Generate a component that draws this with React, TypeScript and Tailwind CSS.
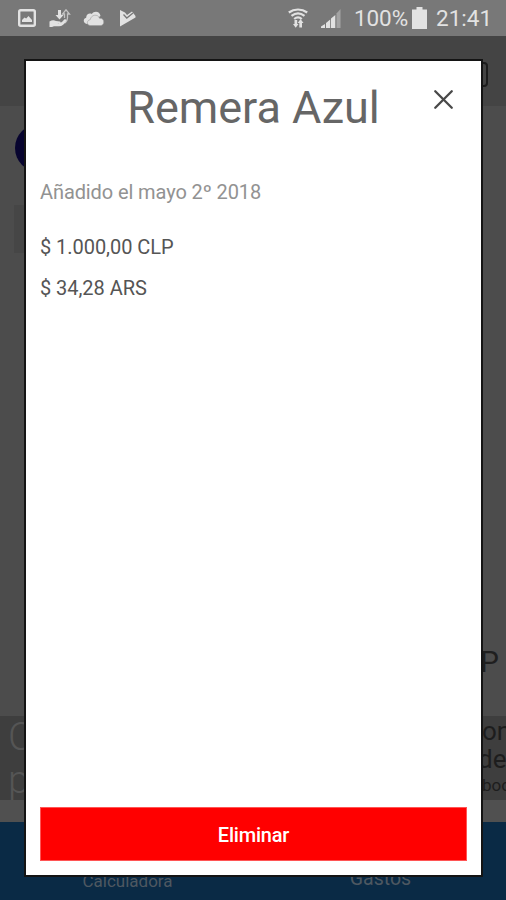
import { X } from "lucide-react";

const StatusBar = () => {
  return (
    <div className="flex h-9 items-center bg-[#787878] text-[#e2e2e2]">
      {/* Notifications */}
      <svg className="ml-[18px] h-[18px] w-[18px]" viewBox="0 0 18 18">
        <rect x="1.200" y="1.200" width="15.600" height="15.600" rx="1.500" fill="none" stroke="currentColor" strokeWidth="2.400" />
        <path d="M4 13v-2l2.500-2.500L8.200 9.500 10.500 7l3.500 4v2z" fill="currentColor" />
      </svg>
      <svg className="ml-[13px] h-[19px] w-[22px]" viewBox="0 0 22 19">
        <path d="M9 1h3v5h2.500l-4 4.500-4-4.500H9z" fill="currentColor" />
        <path d="M15.500 9V5h-2L17 .8 20.500 5h-2v4c0 2-1 3.500-2.500 5" fill="none" stroke="#c4c4c4" strokeWidth="1.300" />
        <path d="M.5 12.500C3 11 5 11 7 12l4 .5c1 .3.8 1.800-.3 1.800H8c3.500.5 5-1 7-3.500 1.500-1.200 3 0 2 1.500-2 3.500-4 5-7 5H5l-2 .8H.5z" fill="currentColor" />
      </svg>
      <svg className="ml-3 h-[17px] w-[22px]" viewBox="0 0 22 17">
        <path d="M4 14C0 13.500-.3 8.600 3.200 7.800 3 4.200 6.500 2.600 8.800 4 11 .5 17 1 17.500 6L8 12z" fill="currentColor" />
        <path d="M7.500 15.500c-4.200 0-4-5.500-.3-5.800C8 4.500 15 3.500 16.500 8.300c3-.2 4.500 2 4.200 4-.1 1.800-1.200 3.200-3.200 3.200z" fill="currentColor" stroke="#9a9a9a" strokeWidth=".6" />
      </svg>
      <svg className="ml-[14px] h-[18px] w-[17px]" viewBox="0 0 17 18">
        <path d="M1 1l5 2.500 2 2.500 5-3.500 3.500 4.500v1.500L1 17.500z" fill="currentColor" />
        <path d="M4.500 5.500L7.800 9l6.200-5" fill="none" stroke="#777777" strokeWidth="1.300" />
      </svg>

      {/* Connection, battery and clock */}
      <svg className="ml-auto h-5 w-5" viewBox="0 0 20 20">
        <g fill="none" stroke="currentColor" strokeWidth="2.200">
          <path d="M.8 4.500c5.500-4 12.900-4 18.400 0" />
          <path d="M3.500 7.900c4-3.200 9-3.200 13 0" />
          <path d="M6.200 11c2.400-2 5.200-2 7.600 0" />
        </g>
        <path d="M6.500 12h2.700v4h1.300L7.700 19.800 5 16h1.500zM12.500 11l3 4h-1.500v4.500h-2.700V15H9.700z" fill="currentColor" />
      </svg>
      <svg className="ml-[13px] h-[19px] w-5" viewBox="0 0 20 19">
        <path d="M0 19v-1.500L4 15v4z" fill="currentColor" />
        <path d="M5 19v-5L9.200 10.500V19zM10 19V9.500L14.300 6v13z" fill="currentColor" />
        <path d="M15.500 19V4.500L19.500 0v19z" fill="#a3a3a3" />
      </svg>
      <span className="ml-[13px] w-[54px] whitespace-nowrap text-[22.500px] leading-9 tracking-[-0.1px]">100%</span>
      <svg className="ml-1 h-[22px] w-[15px]" viewBox="0 0 15 22">
        <path d="M4.500 0h6v2.500H15V22H0V2.500h4.500z" fill="currentColor" />
      </svg>
      <span className="ml-[9px] w-[70px] whitespace-nowrap text-[22.500px] leading-9">21:41</span>
    </div>
  );
};

const Screen = () => {
  return (
    <div className="flex h-[864px] flex-col overflow-hidden">
      <div className="flex h-[70px] items-start justify-end bg-[#444444] pt-[26px] pr-[18px]">
        <div className="h-[25px] w-5 rounded-sm border-2 border-[#1c1c1c]"></div>
      </div>

      <div className="flex h-[610px] flex-col bg-[#4c4c4c]">
        <div className="h-[99px] pt-[18px] pl-[15px]">
          <div className="h-12 w-12 rounded-full bg-[#07042f]"></div>
        </div>
        <div className="ml-[14px] h-[48px] w-10 bg-[#464646]"></div>
        <span className="mt-auto mb-[36px] ml-[480px] text-[30px] leading-9 text-[#1f1f1f]">P</span>
      </div>

      {/* Ad banner */}
      <div className="flex h-[84px] justify-between overflow-hidden bg-[#3e3e3e]">
        <div className="flex flex-col pl-2 text-[39px] leading-[43px] font-light text-[#555555]">
          <span>C</span>
          <span>p</span>
        </div>
        <div className="flex w-[24px] flex-col whitespace-nowrap text-[26px] leading-7 text-[#1d1d1d]">
          <span className="mt-px">on</span>
          <span className="-ml-1">de</span>
          <span className="text-[17px] leading-6">boo</span>
        </div>
      </div>
      <div className="h-[22px] bg-[#505050]"></div>

      {/* Bottom tabs */}
      <div className="flex h-[78px] items-end bg-[#0a2a45] pb-[9px] text-[#4e5861]">
        <span className="w-[255px] text-center text-[17px] leading-5">Calculadora</span>
        <span className="w-[251px] pb-[2px] text-center text-[19.500px] leading-5">Gastos</span>
      </div>
    </div>
  );
};

const ProductDialog = () => {
  return (
    <div className="absolute top-[59px] left-6 flex h-[818px] w-[459px] flex-col border-2 border-[#141414] bg-white px-[14px] pb-[14px]">
      <div className="relative h-[92px]">
        <h1 className="pt-[20px] text-center text-[45px] leading-[53px] whitespace-nowrap text-[#666666]">Remera Azul</h1>
        <button className="absolute top-[22px] right-[7px]" aria-label="Cerrar">
          <X className="h-[33px] w-[33px] text-[#484848]" strokeWidth={1.7} />
        </button>
      </div>
      <p className="mt-[27px] text-[20px] leading-6 tracking-[-0.1px] text-[#929292]">Añadido el mayo 2º 2018</p>
      <p className="mt-[31px] text-[20px] leading-6 tracking-[-0.050px] text-[#555555]">$ 1.000,00 CLP</p>
      <p className="mt-[17px] text-[20px] leading-6 tracking-[-0.050px] text-[#555555]">$ 34,28 ARS</p>
      <button className="mt-auto h-[54px] w-full border border-[#ff5555] bg-[#ff0000] pt-px text-[20px] font-medium tracking-[-0.2px] text-white">
        Eliminar
      </button>
    </div>
  );
};

const App = () => {
  return (
    <main className="relative h-[900px] w-[506px] overflow-hidden font-[Roboto,sans-serif]">
      <StatusBar />
      <Screen />
      <ProductDialog />
    </main>
  );
};

export default App;
